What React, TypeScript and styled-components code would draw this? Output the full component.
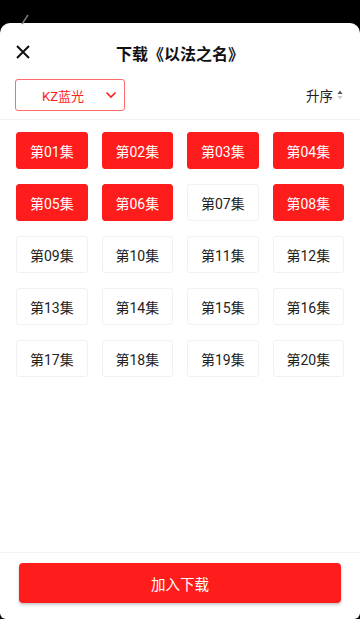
import React from "react";
import styled, { createGlobalStyle } from "styled-components";

const Global = createGlobalStyle`
  html, body { margin: 0; padding: 0; background: #000; }
  body { font-family: Roboto, "Noto Sans CJK SC", sans-serif; }
  * { box-sizing: border-box; }
`;

const RED = "#ff1c1c";

const Screen = styled.div`
  position: relative;
  width: 360px;
  height: 619px;
  padding-top: 23px;
  background: #000;
  overflow: hidden;
`;

const BackHint = styled.svg`
  position: absolute;
  left: 18px;
  top: 12px;
`;

const Sheet = styled.div`
  height: 596px;
  background: #fff;
  border-radius: 10px 10px 6px 6px;
  display: flex;
  flex-direction: column;
`;

const Header = styled.div`
  position: relative;
  height: 56px;
  padding-top: 4px;
  display: flex;
  align-items: center;
  justify-content: center;
`;

const CloseBtn = styled.button`
  position: absolute;
  left: 14px;
  top: 20px;
  width: 18px;
  height: 18px;
  padding: 0;
  border: none;
  background: none;
  display: flex;
  align-items: center;
  justify-content: center;
`;

const Title = styled.h1`
  margin: 0;
  font-size: 16px;
  font-weight: 700;
  color: #111;
  font-family: "Noto Sans CJK SC", sans-serif;
`;

const Toolbar = styled.div`
  display: flex;
  align-items: center;
  justify-content: space-between;
  padding: 0 15px 8px 15px;
  border-bottom: 1px solid #f2f2f2;
`;

const Select = styled.div`
  position: relative;
  width: 110px;
  height: 32px;
  border: 1px solid #ff6b6b;
  border-radius: 3px;
  display: flex;
  align-items: center;
  justify-content: center;
  color: ${RED};
  font-size: 13px;
  padding-right: 14px;
`;

const Chevron = styled.svg`
  position: absolute;
  right: 7px;
  top: 11px;
`;

const Sort = styled.div`
  display: flex;
  align-items: center;
  gap: 4px;
  margin-right: 2px;
  font-size: 13.5px;
  color: #222;
`;

const Grid = styled.div`
  flex: 1;
  display: grid;
  grid-template-columns: repeat(4, 1fr);
  grid-auto-rows: 37px;
  align-content: start;
  column-gap: 14px;
  row-gap: 15px;
  padding: 12px 16px 0 16px;
`;

const Episode = styled.div<{ $active: boolean }>`
  display: flex;
  align-items: center;
  justify-content: center;
  border-radius: 3px;
  font-size: 14px;
  background: ${(p) => (p.$active ? RED : "#fff")};
  color: ${(p) => (p.$active ? "#fff" : "#222")};
  border: 1px solid ${(p) => (p.$active ? RED : "#f1f1f1")};
`;

const Footer = styled.div`
  border-top: 1px solid #f3f3f3;
  padding: 10px 19px 16px 19px;
`;

const AddButton = styled.button`
  width: 100%;
  height: 40px;
  border: none;
  border-radius: 4px;
  background: ${RED};
  color: #fff;
  font-size: 14.5px;
  font-family: Roboto, "Noto Sans CJK SC", sans-serif;
  box-shadow: 0 2px 3px rgba(0, 0, 0, 0.22);
`;

const active = new Set([1, 2, 3, 4, 5, 6, 8]);

export default function App() {
  const eps = Array.from({ length: 20 }, (_, i) => i + 1);
  return (
    <Screen>
      <Global />
      <BackHint width="14" height="16" viewBox="0 0 14 16">
        <path d="M10 3 L4 12" stroke="#777" strokeWidth="1.5" fill="none" />
      </BackHint>
      <Sheet>
        <Header>
          <CloseBtn aria-label="关闭">
            <svg width="14" height="14" viewBox="0 0 14 14">
              <path d="M1 1 L13 13 M13 1 L1 13" stroke="#111" strokeWidth="2" fill="none" />
            </svg>
          </CloseBtn>
          <Title>下载《以法之名》</Title>
        </Header>
        <Toolbar>
          <Select>
            KZ蓝光
            <Chevron width="12" height="8" viewBox="0 0 12 8">
              <path d="M1.5 1.5 L6 6 L10.5 1.5" stroke={RED} strokeWidth="1.6" fill="none" />
            </Chevron>
          </Select>
          <Sort>
            升序
            <svg width="6" height="10" viewBox="0 0 6 10">
              <path d="M3 0.5 L5.5 4 L0.5 4 Z" fill="#555" />
              <path d="M3 9.5 L5.5 6 L0.5 6 Z" fill="#ccc" />
            </svg>
          </Sort>
        </Toolbar>
        <Grid>
          {eps.map((n) => (
            <Episode key={n} $active={active.has(n)}>
              第{String(n).padStart(2, "0")}集
            </Episode>
          ))}
        </Grid>
        <Footer>
          <AddButton>加入下载</AddButton>
        </Footer>
      </Sheet>
    </Screen>
  );
}
